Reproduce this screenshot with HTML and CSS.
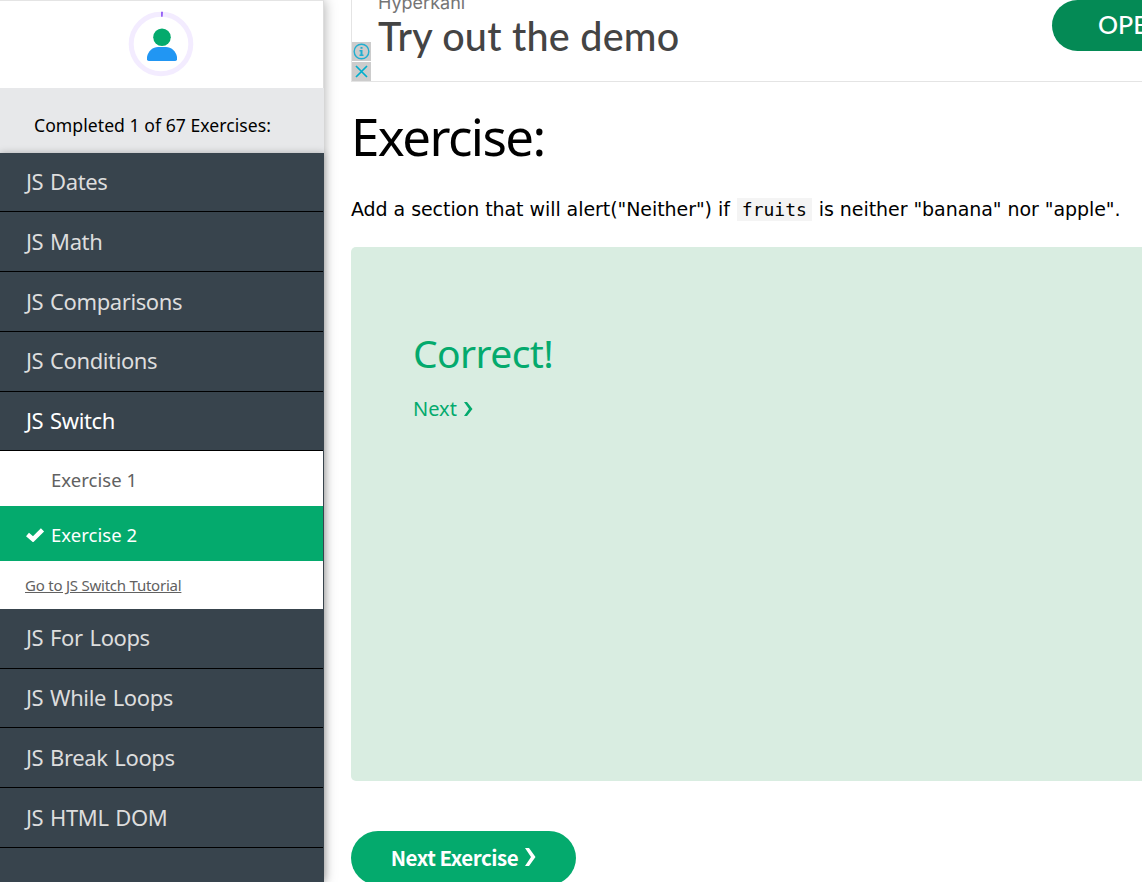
FILE: index.html
```html
<!DOCTYPE html>
<html lang="en">
<head>
<meta charset="utf-8">
<title>JS Exercise</title>
<link rel="stylesheet" href="styles.css">
</head>
<body>
<div class="page">
  <aside class="sidebar">
    <div class="profile">
      <svg class="avatar" width="66" height="66" viewBox="0 0 66 66">
        <circle cx="33" cy="33" r="29.800" fill="none" stroke="#f3ecff" stroke-width="5"/>
        <path d="M33 .8h2l-.3 5H33z" fill="#9763f6"/>
        <circle cx="34" cy="26.300" r="8.800" fill="#04aa6d"/>
        <path d="M19 48.200V46C20 40 25 36 30 36h8c5 0 10 4 11 10v2.200q0 1.800-1.800 1.800H20.800Q19 50 19 48.200z" fill="#2196f3"/>
      </svg>
    </div>
    <div class="progress"><span>Completed 1 of 67 Exercises:</span></div>
    <nav class="menu">
      <a class="item short"><span>JS Dates</span></a>
      <a class="item"><span>JS Math</span></a>
      <a class="item"><span>JS Comparisons</span></a>
      <a class="item raised"><span>JS Conditions</span></a>
      <a class="item short current"><span>JS Switch</span></a>
      <div class="submenu">
        <a class="sub"><span>Exercise 1</span></a>
        <a class="sub done"><svg class="check" width="20" height="15" viewBox="0 0 20 15"><path d="M2.500 7.500l5.500 4.800L17.500 2.800" fill="none" stroke="#fff" stroke-width="4.500"/></svg><span>Exercise 2</span></a>
        <a class="tutorial"><span>Go to JS Switch Tutorial</span></a>
      </div>
      <a class="item raised"><span>JS For Loops</span></a>
      <a class="item short"><span>JS While Loops</span></a>
      <a class="item"><span>JS Break Loops</span></a>
      <a class="item"><span>JS HTML DOM</span></a>
    </nav>
  </aside>
  <main class="content">
    <section class="ad">
      <div class="ad-icons">
        <svg width="19" height="19" viewBox="0 0 19 19"><path fill="#ccc" d="M0 0h19v19H0z"/><circle cx="9.500" cy="9.500" r="7.300" fill="none" stroke="#21aed0" stroke-width="1.400"/><path d="M8.500 5h2v1.800h-2zM7.500 8h3v4.500h1V14h-4v-1.500h1v-3h-1z" fill="#21aed0"/></svg>
        <svg width="19" height="19" viewBox="0 0 19 19"><path fill="#ccc" d="M0 0h19v19H0z"/><path d="M4 4l11 11M15 4L4 15" stroke="#00aecd" stroke-width="1.700"/></svg>
      </div>
      <div class="ad-copy">
        <span class="ad-brand">Hyperkani</span>
        <span class="ad-title">Try out the demo</span>
      </div>
      <a class="ad-button"><span>OPEN</span></a>
    </section>
    <h1 class="title"><span>Exercise:</span></h1>
    <p class="task"><span>Add a section that will alert("Neither") if</span><code class="code">fruits</code><span>is neither "banana" nor "apple".</span></p>
    <section class="result">
      <h2 class="correct"><span>Correct!</span></h2>
      <a class="next"><span>Next</span><svg width="9" height="14" viewBox="0 0 9 14"><path d="M0 0h3l5.500 7L3 14H0l5-7z" fill="#04aa6d"/></svg></a>
    </section>
    <a class="next-button"><span>Next Exercise</span><svg width="11" height="18" viewBox="0 0 11 18"><path d="M0 0h4l6.500 9L4 18H0l6-9z" fill="#fff"/></svg></a>
  </main>
</div>
</body>
</html>
```
FILE: styles.css
```css
* { box-sizing: border-box; }
html, body { margin: 0; height: 882px; overflow: hidden; background: #fff; }
body { font-family: "Noto Sans", "Open Sans", sans-serif; color: #000; }
span { white-space: nowrap; }
h1, h2, p { margin: 0; font-weight: 400; }
.page { display: flex; width: 1142px; height: 882px; overflow: hidden; }
.sidebar { flex: 0 0 324px; height: 882px; display: flex; flex-direction: column; background: #e7e8ea; box-shadow: 0 0 12px rgba(0,0,0,.34); }
.profile { height: 88px; border-top: 1px solid #e4e4e4; border-right: 1px solid #ddd; background: #fff; padding: 10px 0 0 128px; }
.avatar { display: block; }
.progress { height: 65px; padding-left: 34px; display: flex; align-items: center; padding-top: 9px; font-size: 17.600px; letter-spacing: .04px; }
.menu { flex: 1; background: #38444d; box-shadow: 0 0 7px rgba(0,0,0,.25); padding-right: 1px; }
.item { display: flex; align-items: center; height: 60px; padding: 0 0 2px 26px; border-bottom: 1px solid #000; color: #ddd; font-size: 22px; letter-spacing: -.4px; word-spacing: 1.500px; }
.item.short { height: 59px; }
.item.raised { padding-bottom: 4px; }
.item.current { color: #fff; }
.submenu { background: #fff; height: 158px; }
.sub { display: flex; align-items: center; height: 55px; padding: 1px 0 0 51px; color: #616161; font-size: 18.500px; letter-spacing: .05px; }
.sub.done { background: #04aa6d; color: #fff; padding-left: 25px; gap: 6px; }
.check { flex: none; margin-top: 1px; }
.tutorial { display: flex; align-items: center; height: 48px; padding-left: 25px; color: #616161; font-size: 15px; letter-spacing: -.23px; text-decoration: underline; }
.content { flex: 1; padding-left: 27px; min-width: 0; display: flex; flex-direction: column; align-items: flex-start; }
.content > * { flex: none; }
.ad { width: 100%; height: 82px; border-left: 1px solid #e4e4e4; border-bottom: 1px solid #e4e4e4; display: flex; }
.ad-icons { display: flex; flex-direction: column; gap: 1px; padding-top: 42px; width: 19px; }
.ad-copy { flex: 1; margin-left: 7px; display: flex; flex-direction: column; margin-top: -9px; }
.ad-brand { font: 18px/24px Inter, sans-serif; color: #757575; }
.ad-title { font: 500 39.500px/41px Lato, sans-serif; letter-spacing: .25px; color: #444; }
.ad-button { width: 90px; height: 51px; flex: none; overflow: hidden; background: #048a55; border-radius: 26px 0 0 26px; color: #fff; font: 500 25px/48px Lato, sans-serif; padding-left: 46px; }
.title { height: 111px; font-size: 51px; line-height: 108px; letter-spacing: -1.550px; }
.task { height: 54px; display: flex; align-items: flex-start; font: 19px/32px "DejaVu Sans", sans-serif; letter-spacing: -.06px; }
.code { background: #f4f4f4; font: 18px/23px "DejaVu Sans Mono", monospace; letter-spacing: 0; padding: 0 5px; margin: 5px 7px 0 7px; }
.result { width: 100%; height: 534px; background: #d9ede1; border-radius: 5px 0 0 5px; padding: 77px 0 0 62px; color: #04aa6d; }
.correct { font-size: 39px; line-height: 58px; letter-spacing: -.6px; }
.next { display: flex; align-items: center; gap: 7px; font-size: 20px; line-height: 54px; }
.next-button { display: flex; align-items: center; justify-content: center; gap: 7px; margin-top: 50px; width: 225px; height: 54px; border-radius: 27px; background: #04aa6d; color: #fff; font-family: "Noto Sans CJK SC", "Noto Sans", sans-serif; font-size: 20.500px; font-weight: 700; letter-spacing: -.45px; }
.next-button span { margin-top: -3px; }
.next-button svg { margin-top: -2px; }
```
